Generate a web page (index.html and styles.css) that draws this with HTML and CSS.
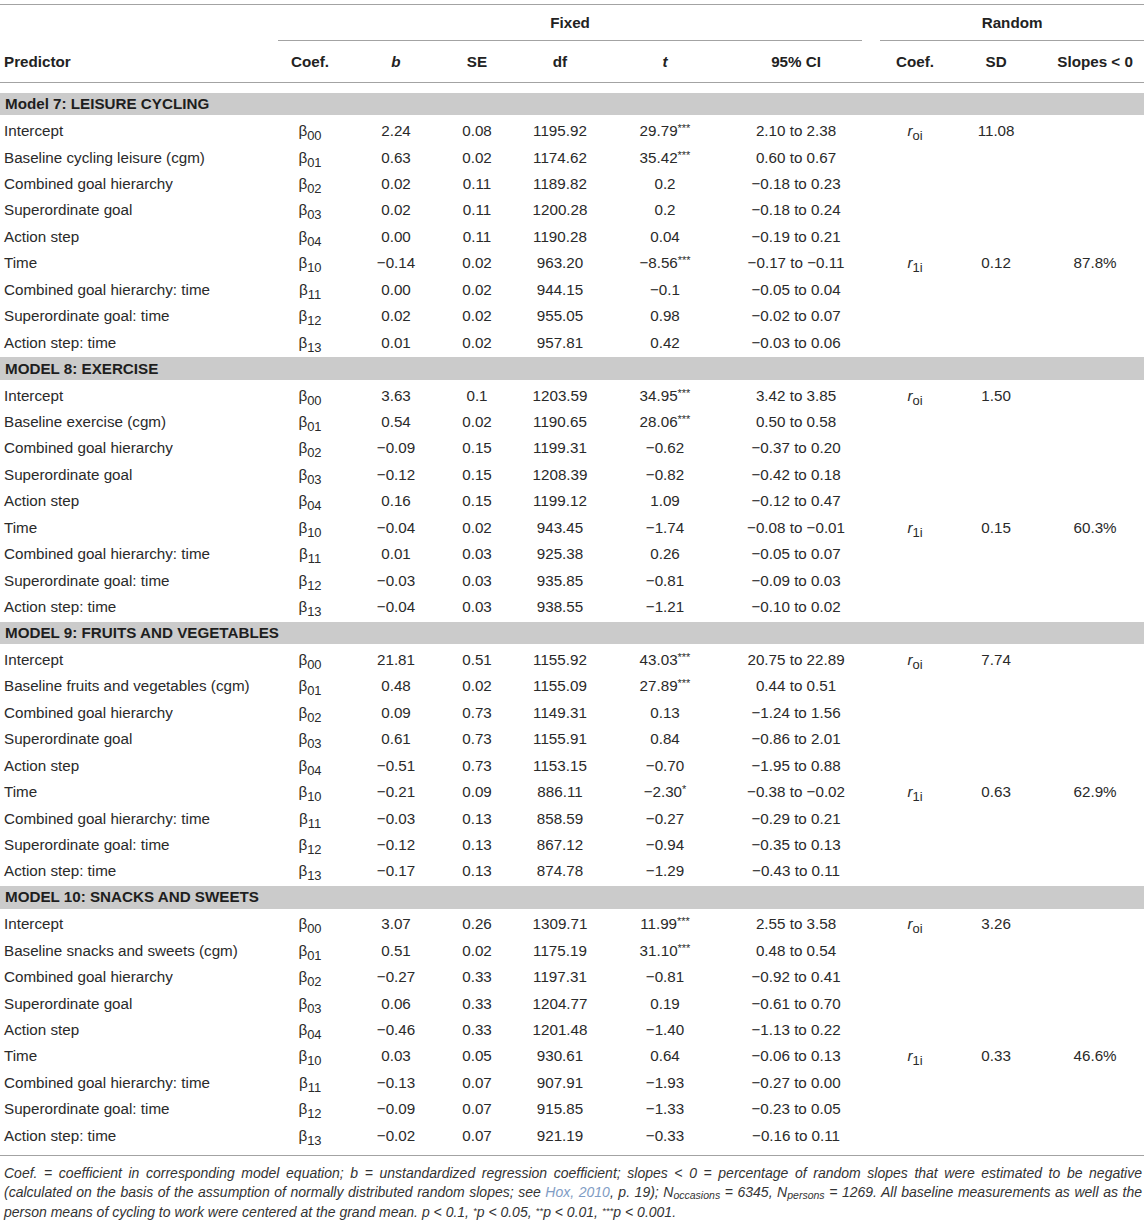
FILE: index.html
```html
<!DOCTYPE html>
<html>
<head>
<meta charset="utf-8">
<link rel="stylesheet" href="styles.css">
</head>
<body>
<div class="page">
<table class="tbl">
<colgroup>
<col class="c-pred"><col class="c-coef"><col class="c-b"><col class="c-se"><col class="c-df"><col class="c-t"><col class="c-ci"><col class="c-rcoef"><col class="c-sd"><col class="c-slopes">
</colgroup>
<thead>
<tr class="h1">
<th></th>
<th colspan="6" class="grp"><span class="grp-fixed">Fixed</span></th>
<th colspan="3" class="grp"><span class="grp-random">Random</span></th>
</tr>
<tr class="h2">
<th class="left">Predictor</th><th>Coef.</th><th><i>b</i></th><th>SE</th><th>df</th><th><i>t</i></th><th>95% CI</th><th>Coef.</th><th>SD</th><th class="slopes">Slopes &lt; 0</th>
</tr>
</thead>
<tbody>
<tr class="spacer"><td colspan="10"></td></tr>
<tr class="band"><td colspan="10">Model 7: LEISURE CYCLING</td></tr>
<tr><td class="left">Intercept</td><td>β<sub>00</sub></td><td>2.24</td><td>0.08</td><td>1195.92</td><td>29.79<sup>***</sup></td><td>2.10 to 2.38</td><td><i>r</i><sub>oi</sub></td><td>11.08</td><td class="slopes"></td></tr>
<tr><td class="left">Baseline cycling leisure (cgm)</td><td>β<sub>01</sub></td><td>0.63</td><td>0.02</td><td>1174.62</td><td>35.42<sup>***</sup></td><td>0.60 to 0.67</td><td></td><td></td><td class="slopes"></td></tr>
<tr><td class="left">Combined goal hierarchy</td><td>β<sub>02</sub></td><td>0.02</td><td>0.11</td><td>1189.82</td><td>0.2</td><td>−0.18 to 0.23</td><td></td><td></td><td class="slopes"></td></tr>
<tr><td class="left">Superordinate goal</td><td>β<sub>03</sub></td><td>0.02</td><td>0.11</td><td>1200.28</td><td>0.2</td><td>−0.18 to 0.24</td><td></td><td></td><td class="slopes"></td></tr>
<tr><td class="left">Action step</td><td>β<sub>04</sub></td><td>0.00</td><td>0.11</td><td>1190.28</td><td>0.04</td><td>−0.19 to 0.21</td><td></td><td></td><td class="slopes"></td></tr>
<tr><td class="left">Time</td><td>β<sub>10</sub></td><td>−0.14</td><td>0.02</td><td>963.20</td><td>−8.56<sup>***</sup></td><td>−0.17 to −0.11</td><td><i>r</i><sub>1i</sub></td><td>0.12</td><td class="slopes">87.8%</td></tr>
<tr><td class="left">Combined goal hierarchy: time</td><td>β<sub>11</sub></td><td>0.00</td><td>0.02</td><td>944.15</td><td>−0.1</td><td>−0.05 to 0.04</td><td></td><td></td><td class="slopes"></td></tr>
<tr><td class="left">Superordinate goal: time</td><td>β<sub>12</sub></td><td>0.02</td><td>0.02</td><td>955.05</td><td>0.98</td><td>−0.02 to 0.07</td><td></td><td></td><td class="slopes"></td></tr>
<tr><td class="left">Action step: time</td><td>β<sub>13</sub></td><td>0.01</td><td>0.02</td><td>957.81</td><td>0.42</td><td>−0.03 to 0.06</td><td></td><td></td><td class="slopes"></td></tr>

<tr class="band"><td colspan="10">MODEL 8: EXERCISE</td></tr>
<tr><td class="left">Intercept</td><td>β<sub>00</sub></td><td>3.63</td><td>0.1</td><td>1203.59</td><td>34.95<sup>***</sup></td><td>3.42 to 3.85</td><td><i>r</i><sub>oi</sub></td><td>1.50</td><td class="slopes"></td></tr>
<tr><td class="left">Baseline exercise (cgm)</td><td>β<sub>01</sub></td><td>0.54</td><td>0.02</td><td>1190.65</td><td>28.06<sup>***</sup></td><td>0.50 to 0.58</td><td></td><td></td><td class="slopes"></td></tr>
<tr><td class="left">Combined goal hierarchy</td><td>β<sub>02</sub></td><td>−0.09</td><td>0.15</td><td>1199.31</td><td>−0.62</td><td>−0.37 to 0.20</td><td></td><td></td><td class="slopes"></td></tr>
<tr><td class="left">Superordinate goal</td><td>β<sub>03</sub></td><td>−0.12</td><td>0.15</td><td>1208.39</td><td>−0.82</td><td>−0.42 to 0.18</td><td></td><td></td><td class="slopes"></td></tr>
<tr><td class="left">Action step</td><td>β<sub>04</sub></td><td>0.16</td><td>0.15</td><td>1199.12</td><td>1.09</td><td>−0.12 to 0.47</td><td></td><td></td><td class="slopes"></td></tr>
<tr><td class="left">Time</td><td>β<sub>10</sub></td><td>−0.04</td><td>0.02</td><td>943.45</td><td>−1.74</td><td>−0.08 to −0.01</td><td><i>r</i><sub>1i</sub></td><td>0.15</td><td class="slopes">60.3%</td></tr>
<tr><td class="left">Combined goal hierarchy: time</td><td>β<sub>11</sub></td><td>0.01</td><td>0.03</td><td>925.38</td><td>0.26</td><td>−0.05 to 0.07</td><td></td><td></td><td class="slopes"></td></tr>
<tr><td class="left">Superordinate goal: time</td><td>β<sub>12</sub></td><td>−0.03</td><td>0.03</td><td>935.85</td><td>−0.81</td><td>−0.09 to 0.03</td><td></td><td></td><td class="slopes"></td></tr>
<tr><td class="left">Action step: time</td><td>β<sub>13</sub></td><td>−0.04</td><td>0.03</td><td>938.55</td><td>−1.21</td><td>−0.10 to 0.02</td><td></td><td></td><td class="slopes"></td></tr>

<tr class="band"><td colspan="10">MODEL 9: FRUITS AND VEGETABLES</td></tr>
<tr><td class="left">Intercept</td><td>β<sub>00</sub></td><td>21.81</td><td>0.51</td><td>1155.92</td><td>43.03<sup>***</sup></td><td>20.75 to 22.89</td><td><i>r</i><sub>oi</sub></td><td>7.74</td><td class="slopes"></td></tr>
<tr><td class="left">Baseline fruits and vegetables (cgm)</td><td>β<sub>01</sub></td><td>0.48</td><td>0.02</td><td>1155.09</td><td>27.89<sup>***</sup></td><td>0.44 to 0.51</td><td></td><td></td><td class="slopes"></td></tr>
<tr><td class="left">Combined goal hierarchy</td><td>β<sub>02</sub></td><td>0.09</td><td>0.73</td><td>1149.31</td><td>0.13</td><td>−1.24 to 1.56</td><td></td><td></td><td class="slopes"></td></tr>
<tr><td class="left">Superordinate goal</td><td>β<sub>03</sub></td><td>0.61</td><td>0.73</td><td>1155.91</td><td>0.84</td><td>−0.86 to 2.01</td><td></td><td></td><td class="slopes"></td></tr>
<tr><td class="left">Action step</td><td>β<sub>04</sub></td><td>−0.51</td><td>0.73</td><td>1153.15</td><td>−0.70</td><td>−1.95 to 0.88</td><td></td><td></td><td class="slopes"></td></tr>
<tr><td class="left">Time</td><td>β<sub>10</sub></td><td>−0.21</td><td>0.09</td><td>886.11</td><td>−2.30<sup>*</sup></td><td>−0.38 to −0.02</td><td><i>r</i><sub>1i</sub></td><td>0.63</td><td class="slopes">62.9%</td></tr>
<tr><td class="left">Combined goal hierarchy: time</td><td>β<sub>11</sub></td><td>−0.03</td><td>0.13</td><td>858.59</td><td>−0.27</td><td>−0.29 to 0.21</td><td></td><td></td><td class="slopes"></td></tr>
<tr><td class="left">Superordinate goal: time</td><td>β<sub>12</sub></td><td>−0.12</td><td>0.13</td><td>867.12</td><td>−0.94</td><td>−0.35 to 0.13</td><td></td><td></td><td class="slopes"></td></tr>
<tr><td class="left">Action step: time</td><td>β<sub>13</sub></td><td>−0.17</td><td>0.13</td><td>874.78</td><td>−1.29</td><td>−0.43 to 0.11</td><td></td><td></td><td class="slopes"></td></tr>

<tr class="band"><td colspan="10">MODEL 10: SNACKS AND SWEETS</td></tr>
<tr><td class="left">Intercept</td><td>β<sub>00</sub></td><td>3.07</td><td>0.26</td><td>1309.71</td><td>11.99<sup>***</sup></td><td>2.55 to 3.58</td><td><i>r</i><sub>oi</sub></td><td>3.26</td><td class="slopes"></td></tr>
<tr><td class="left">Baseline snacks and sweets (cgm)</td><td>β<sub>01</sub></td><td>0.51</td><td>0.02</td><td>1175.19</td><td>31.10<sup>***</sup></td><td>0.48 to 0.54</td><td></td><td></td><td class="slopes"></td></tr>
<tr><td class="left">Combined goal hierarchy</td><td>β<sub>02</sub></td><td>−0.27</td><td>0.33</td><td>1197.31</td><td>−0.81</td><td>−0.92 to 0.41</td><td></td><td></td><td class="slopes"></td></tr>
<tr><td class="left">Superordinate goal</td><td>β<sub>03</sub></td><td>0.06</td><td>0.33</td><td>1204.77</td><td>0.19</td><td>−0.61 to 0.70</td><td></td><td></td><td class="slopes"></td></tr>
<tr><td class="left">Action step</td><td>β<sub>04</sub></td><td>−0.46</td><td>0.33</td><td>1201.48</td><td>−1.40</td><td>−1.13 to 0.22</td><td></td><td></td><td class="slopes"></td></tr>
<tr><td class="left">Time</td><td>β<sub>10</sub></td><td>0.03</td><td>0.05</td><td>930.61</td><td>0.64</td><td>−0.06 to 0.13</td><td><i>r</i><sub>1i</sub></td><td>0.33</td><td class="slopes">46.6%</td></tr>
<tr><td class="left">Combined goal hierarchy: time</td><td>β<sub>11</sub></td><td>−0.13</td><td>0.07</td><td>907.91</td><td>−1.93</td><td>−0.27 to 0.00</td><td></td><td></td><td class="slopes"></td></tr>
<tr><td class="left">Superordinate goal: time</td><td>β<sub>12</sub></td><td>−0.09</td><td>0.07</td><td>915.85</td><td>−1.33</td><td>−0.23 to 0.05</td><td></td><td></td><td class="slopes"></td></tr>
<tr><td class="left">Action step: time</td><td>β<sub>13</sub></td><td>−0.02</td><td>0.07</td><td>921.19</td><td>−0.33</td><td>−0.16 to 0.11</td><td></td><td></td><td class="slopes"></td></tr>
</tbody>
</table>
<div class="foot">
<div class="fline just">Coef. = coefficient in corresponding model equation; b = unstandardized regression coefficient; slopes &lt; 0 = percentage of random slopes that were estimated to be negative</div>
<div class="fline just">(calculated on the basis of the assumption of normally distributed random slopes; see <span class="ref">Hox, 2010</span>, p. 19); N<sub class="fsub">occasions</sub> = 6345, N<sub class="fsub">persons</sub> = 1269. All baseline measurements as well as the</div>
<div class="fline">person means of cycling to work were centered at the grand mean. p &lt; 0.1, <sup class="fsup">*</sup>p &lt; 0.05, <sup class="fsup">**</sup>p &lt; 0.01, <sup class="fsup">***</sup>p &lt; 0.001.</div>
</div>
</div>
</body>
</html>
```
FILE: styles.css
```css
html, body {
  margin: 0;
  padding: 0;
  background: #fff;
}
.page {
  width: 1144px;
  padding-top: 4px;
  font-family: "Liberation Sans", Arial, sans-serif;
  color: #2a2a2a;
}
.tbl {
  width: 1144px;
  table-layout: fixed;
  border-collapse: separate;
  border-spacing: 0;
  font-size: 15.2px;
}
.c-pred { width: 270px; }
.c-coef { width: 80px; }
.c-b { width: 92px; }
.c-se { width: 70px; }
.c-df { width: 96px; }
.c-t { width: 114px; }
.c-ci { width: 148px; }
.c-rcoef { width: 90px; }
.c-sd { width: 72px; }
.c-slopes { width: 112px; }

.tbl th, .tbl td {
  padding: 0;
  text-align: center;
  white-space: nowrap;
}
.tbl .left {
  text-align: left;
  padding-left: 4px;
}
.tbl .slopes {
  padding-left: 14px;
}
.h1 th {
  border-top: 1px solid #a3a3a3;
  height: 36px;
  vertical-align: bottom;
  font-weight: bold;
  color: #222;
}
.grp-fixed, .grp-random {
  display: block;
  line-height: 18px;
  padding-bottom: 8px;
  border-bottom: 1px solid #a3a3a3;
}
.grp-fixed {
  margin: 0 8px;
}
.grp-random {
  margin-left: 10px;
}
.h2 th {
  height: 40px;
  border-bottom: 1px solid #a3a3a3;
  font-weight: bold;
  color: #222;
  vertical-align: middle;
  padding-bottom: 1px;
}
.tbl tbody tr {
  height: 26.45px;
}
.tbl tbody tr.spacer {
  height: 8px;
}
.spacer td {
  height: 8px;
}
.band td {
  background: #cbcbcb;
  border-top: 2px solid #fff;
  border-bottom: 2px solid #fff;
  text-align: left;
  padding-left: 5px;
  font-weight: bold;
  color: #1e1e1e;
  height: 22px;
  line-height: 22px;
}
.tbl sub {
  font-size: 0.85em;
  vertical-align: -0.3em;
  line-height: 0;
}
.tbl sup {
  font-size: 0.72em;
  vertical-align: 0.35em;
  line-height: 0;
}
.foot {
  margin-top: 6px;
  border-top: 1px solid #a3a3a3;
  padding: 8px 2px 0 4px;
  font-style: italic;
  font-size: 14px;
  line-height: 19.5px;
  color: #333;
}
.fline {
  white-space: nowrap;
}
.fline.just {
  text-align: justify;
  text-align-last: justify;
  white-space: normal;
}
.ref {
  color: #7f9cc4;
}
.fsub {
  font-size: 0.75em;
  vertical-align: -0.15em;
  line-height: 0;
}
.fsup {
  font-size: 0.7em;
  vertical-align: 0.35em;
  line-height: 0;
}
```
